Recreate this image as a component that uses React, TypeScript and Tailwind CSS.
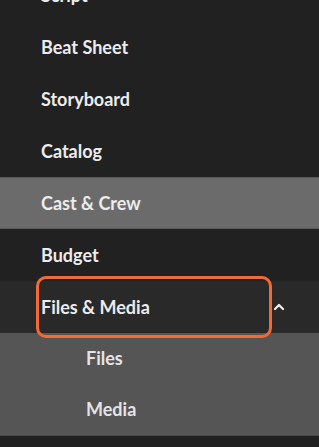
import { ChevronUp } from 'lucide-react'

const items = ['Script', 'Beat Sheet', 'Storyboard', 'Catalog', 'Cast & Crew', 'Budget']

export default function App() {
  return (
    <main className="w-[319px] h-[447px] overflow-hidden bg-[#212121] font-['Lato',sans-serif] text-[#ececec]">
      <nav className="-mt-[31px] flex flex-col">
        {items.map((label) => (
          <div
            key={label}
            className={
              label === 'Cast & Crew'
                ? 'h-[52px] flex items-center pl-[41px] bg-[#6b6b6b] border-y border-[#5a5a5a]'
                : 'h-[52px] flex items-center pl-[41px]'
            }
          >
            <span className="text-[18px] font-bold">{label}</span>
          </div>
        ))}

        <div className="relative h-[52px] flex items-center justify-between pl-[41px] pr-[32px] bg-[#292929]">
          <span className="text-[18px] font-bold">Files &amp; Media</span>
          <ChevronUp className="w-[16px] h-[16px]" strokeWidth={3.5} />
          <div className="absolute left-[36px] top-[-5px] w-[236px] h-[62px] rounded-[10px] border-[3px] border-[#f36a35]" />
        </div>

        <div className="bg-[#555555] border-b border-[#4a4a4a]">
          <div className="h-[51px] flex items-center pl-[86px]">
            <span className="text-[18px] font-bold text-[#e4e4e4]">Files</span>
          </div>
          <div className="h-[51px] flex items-center pl-[86px]">
            <span className="text-[18px] font-bold text-[#e4e4e4]">Media</span>
          </div>
        </div>
      </nav>
    </main>
  )
}
